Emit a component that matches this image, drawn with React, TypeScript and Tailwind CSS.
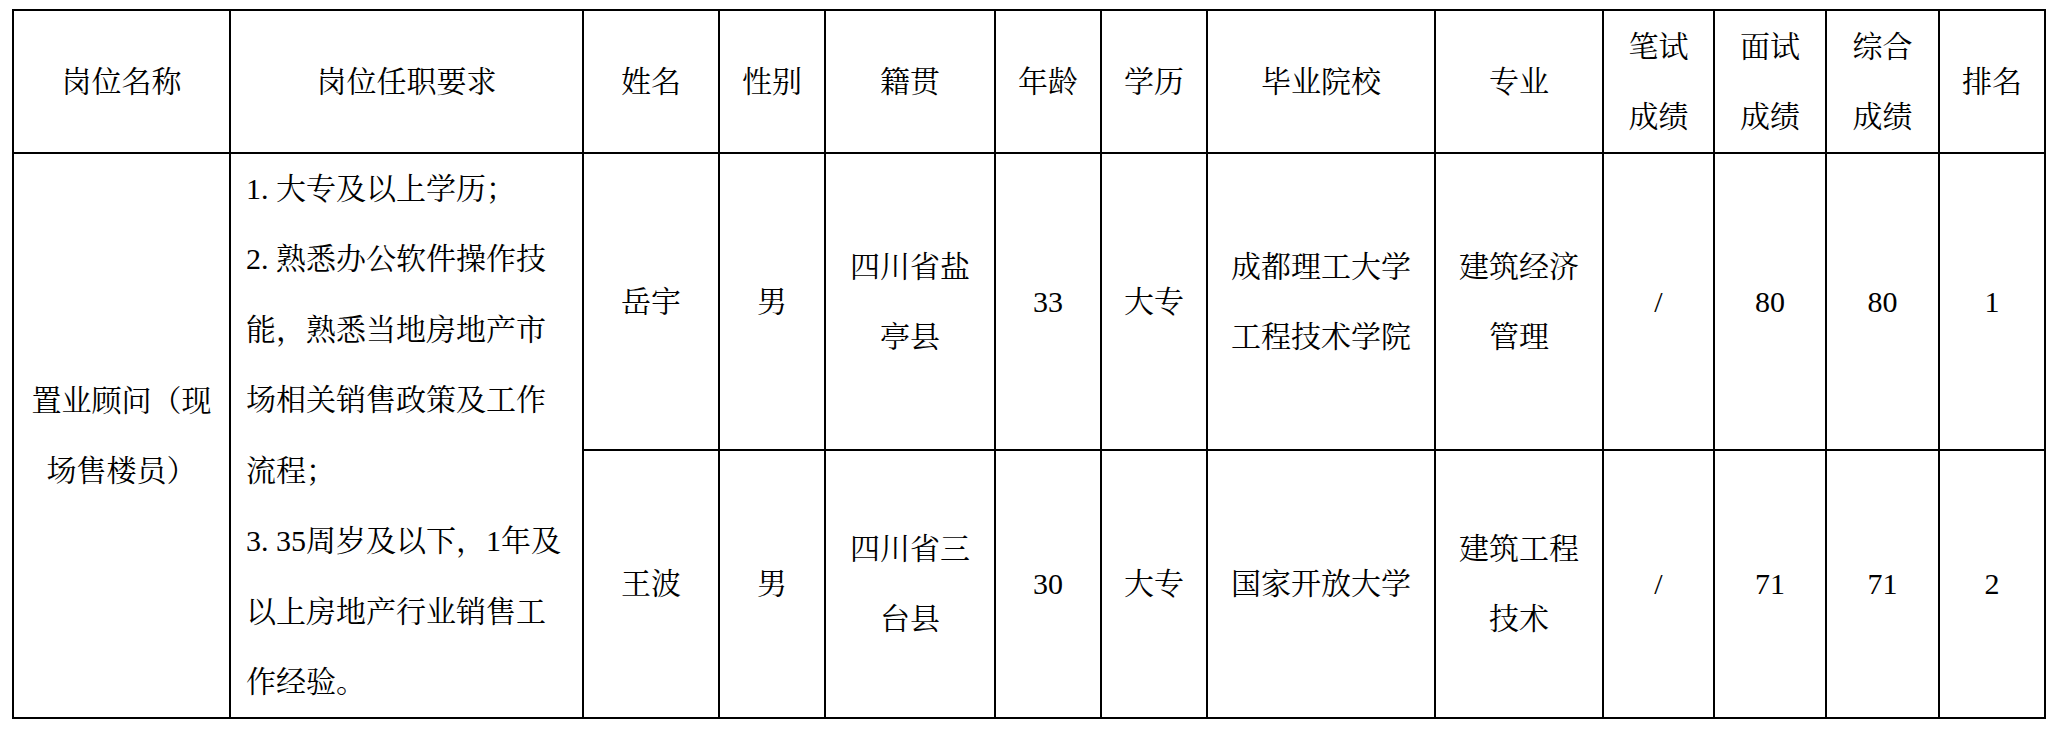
const headers = [
    ['岗位名称'],
    ['岗位任职要求'],
    ['姓名'],
    ['性别'],
    ['籍贯'],
    ['年龄'],
    ['学历'],
    ['毕业院校'],
    ['专业'],
    ['笔试', '成绩'],
    ['面试', '成绩'],
    ['综合', '成绩'],
    ['排名'],
];

const people = [
    [['岳宇'], ['男'], ['四川省盐', '亭县'], ['33'], ['大专'], ['成都理工大学', '工程技术学院'], ['建筑经济', '管理'], ['/'], ['80'], ['80'], ['1']],
    [['王波'], ['男'], ['四川省三', '台县'], ['30'], ['大专'], ['国家开放大学'], ['建筑工程', '技术'], ['/'], ['71'], ['71'], ['2']],
];

const requirements: [string, string][] = [
    ['1', '大专及以上学历；'],
    ['2', '熟悉办公软件操作技'],
    ['', '能，熟悉当地房地产市'],
    ['', '场相关销售政策及工作'],
    ['', '流程；'],
    ['3', '35周岁及以下，1年及'],
    ['', '以上房地产行业销售工'],
    ['', '作经验。'],
];

const Cell = ({ lines, className = '' }: { lines: string[]; className?: string }) => (
    <div className={`bg-white flex flex-col items-center justify-center text-center ${className}`}>
        {lines.map((line, i) => (
            <span key={i} className="block whitespace-nowrap">{line}</span>
        ))}
    </div>
);

const App = () => {
    return (
        <div className="min-h-screen w-full bg-white pl-[12px] pt-[9px] text-black font-[family-name:Liberation_Serif,Noto_Serif_CJK_SC,Noto_Sans_CJK_SC,serif] text-[30px] leading-[70px] font-normal">
            <div className="grid w-max grid-cols-[215px_351px_134px_104px_168px_104px_104px_226px_166px_109px_110px_111px_104px] grid-rows-[141px_295px_266px] gap-[2px] bg-black p-[2px]">
                {headers.map((h, i) => (
                    <Cell key={i} lines={h} />
                ))}

                <Cell lines={['置业顾问（现', '场售楼员）']} className="row-span-2" />

                <div className="row-span-2 bg-white flex flex-col justify-center pl-[15px] overflow-hidden leading-[70.5px]">
                    {requirements.map(([num, text], i) => (
                        <span key={i} className="block whitespace-nowrap">
                            {num && (
                                <>
                                    {num}
                                    <span className="inline-block w-[15px]">.</span>
                                </>
                            )}
                            {text}
                        </span>
                    ))}
                </div>

                {people.map((row, r) =>
                    row.map((lines, c) => <Cell key={`${r}-${c}`} lines={lines} />)
                )}
            </div>
        </div>
    );
};

export default App;
